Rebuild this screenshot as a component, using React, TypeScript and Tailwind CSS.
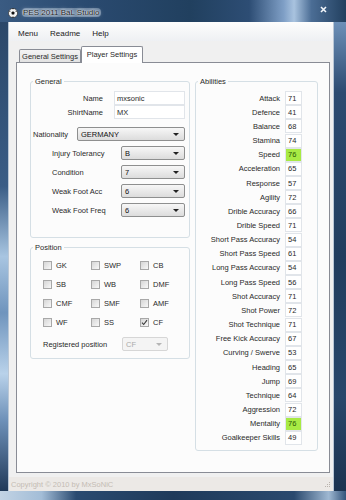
type Ability = { name: string; value: number; highlight?: boolean };

const abilities: Ability[] = [
  { name: "Attack", value: 71 },
  { name: "Defence", value: 41 },
  { name: "Balance", value: 68 },
  { name: "Stamina", value: 74 },
  { name: "Speed", value: 76, highlight: true },
  { name: "Acceleration", value: 65 },
  { name: "Response", value: 57 },
  { name: "Agility", value: 72 },
  { name: "Drible Accuracy", value: 66 },
  { name: "Drible Speed", value: 71 },
  { name: "Short Pass Accuracy", value: 54 },
  { name: "Short Pass Speed", value: 61 },
  { name: "Long Pass Accuracy", value: 54 },
  { name: "Long Pass Speed", value: 56 },
  { name: "Shot Accuracy", value: 71 },
  { name: "Shot Power", value: 72 },
  { name: "Shot Technique", value: 71 },
  { name: "Free Kick Accuracy", value: 67 },
  { name: "Curving / Swerve", value: 53 },
  { name: "Heading", value: 65 },
  { name: "Jump", value: 69 },
  { name: "Technique", value: 64 },
  { name: "Aggression", value: 72 },
  { name: "Mentality", value: 76, highlight: true },
  { name: "Goalkeeper Skills", value: 49 },
];

const positions = [
  ["GK", "SWP", "CB"],
  ["SB", "WB", "DMF"],
  ["CMF", "SMF", "AMF"],
  ["WF", "SS", "CF"],
];

type GroupBoxProps = {
  title: string;
  className: string;
  children: React.ReactNode;
};

function GroupBox(props: GroupBoxProps) {
  return (
    <fieldset className={`rounded-[3px] border border-[#d5dfe5] ${props.className}`}>
      <legend className="ml-[2px] px-[2px] leading-[9px]">{props.title}</legend>
      {props.children}
    </fieldset>
  );
}

type ComboProps = { value: string; width: string; disabled?: boolean };

function Combo(props: ComboProps) {
  return (
    <div
      className={`flex h-[14px] items-center justify-between rounded-[2px] border pl-[3px] pr-[5px] ${props.width} ${
        props.disabled
          ? "border-[#d6d6d6] bg-[#f4f4f4] text-[#aaaaaa]"
          : "border-[#8e8f8f] bg-[linear-gradient(#f7f7f7,#dcdcdc)] text-[#111]"
      }`}
    >
      <span>{props.value}</span>
      <span
        className={`h-0 w-0 border-x-[3px] border-t-[3px] border-x-transparent ${
          props.disabled ? "border-t-[#b5b5b5]" : "border-t-[#222]"
        }`}
      />
    </div>
  );
}

function CheckBox({ label, checked }: { label: string; checked: boolean }) {
  return (
    <div className="flex items-center">
      <span className="flex h-[9px] w-[9px] items-center justify-center border border-[#a8a8a8] bg-[linear-gradient(135deg,#d6d6d6,#f8f8f8)]">
        {checked && (
          <svg width="7" height="7" viewBox="0 0 7 7">
            <path d="M1 3.6 L2.7 5.5 L6 1.2" fill="none" stroke="#3a3a3a" strokeWidth="1.1" />
          </svg>
        )}
      </span>
      <span className="ml-[4px]">{label}</span>
    </div>
  );
}

function SoccerBall() {
  return (
    <svg width="10" height="10" viewBox="0 0 10 10">
      <circle cx="5" cy="5" r="4.6" fill="#f4f4f4" stroke="#222" strokeWidth="0.6" />
      <path d="M5 3.2 L6.7 4.4 L6.1 6.4 L3.9 6.4 L3.3 4.4 Z" fill="#111" />
      <path d="M1 3.4 L2.2 2.6 L2.3 4 Z M9 3.4 L7.8 2.6 L7.7 4 Z M3.6 9.2 L5 8.4 L6.4 9.2 Z M4 0.6 L5 1.4 L6 0.6 Z" fill="#111" />
    </svg>
  );
}

export default function App() {
  return (
    <div className="flex h-[500px] w-[346px] flex-col overflow-hidden font-['Liberation_Sans',Arial,sans-serif] text-[7.5px] leading-[9px] text-[#2a2a2a]">
      {/* title bar */}
      <div className="flex h-[22px] items-center bg-[linear-gradient(90deg,#3a5b82_0%,#2a4a70_25%,#21405f_55%,#2d4d74_72%,#7f9fc6_82%,#a9c3df_85%,#4b6d95_90%,#22405f_100%)] pl-[8px] pr-[19px] pt-[3px]">
        <SoccerBall />
        <span className="ml-[4px] rounded-[4px] bg-[#c9d6e3]/40 px-[1px] text-[8px] text-[#1b1b1b] [text-shadow:0_0_5px_#e6edf5,0_0_3px_#e6edf5,0_0_1px_#ffffff]">
          PES 2011 BaL Studio
        </span>
        <svg className="ml-auto mb-[6px]" width="7" height="7" viewBox="0 0 7 7">
          <path d="M1 1 L6 6 M6 1 L1 6" stroke="#f2f6fa" strokeWidth="1.6" />
        </svg>
      </div>

      <div className="flex h-[469px]">
        <div className="w-[8px] bg-[linear-gradient(180deg,#2b4769_0%,#3a5d86_35%,#a8c5e1_50%,#6f94bd_62%,#b9d2ea_75%,#6d90b8_85%,#213a59_100%)]" />

        {/* client area */}
        <div className="flex w-[326px] flex-col border-x border-[#b9c7d6] bg-[#f0f0f0]">
          {/* menu */}
          <div className="flex h-[19px] items-center bg-[linear-gradient(#fdfdfd,#eef0f3)] pl-[3px] pt-[3px] text-[8px] text-[#1a1a1a]">
            <span className="px-[6px]">Menu</span>
            <span className="px-[6px]">Readme</span>
            <span className="px-[6px]">Help</span>
          </div>

          {/* tabs */}
          <div className="flex h-[21px] items-end pl-[10px]">
            <div className="flex h-[13px] w-[62px] items-center justify-center rounded-t-[2px] border border-b-0 border-[#898c95] bg-[linear-gradient(#f4f4f4,#e2e2e2)]">
              General Settings
            </div>
            <div className="relative z-10 -mb-px flex h-[17px] w-[62px] items-start justify-center rounded-t-[2px] border border-b-0 border-[#898c95] bg-white pt-[3px]">
              Player Settings
            </div>
          </div>

          {/* tab panel */}
          <div className="ml-[7px] mr-[3px] flex h-[411px] border border-[#898c95] bg-[#fcfcfc] pl-[13px] pt-[14px]">
            <div className="flex w-[160px] flex-col">
              <GroupBox title="General" className="h-[161px]">
                <div className="mt-[5px] flex h-[14px] items-center">
                  <span className="w-[72px] text-right">Name</span>
                  <span className="ml-[11px] flex h-[14px] w-[71px] items-center border border-[#e1e5ea] bg-white pl-[2px]">
                    mxsonic
                  </span>
                </div>
                <div className="flex h-[14px] items-center">
                  <span className="w-[72px] text-right">ShirtName</span>
                  <span className="ml-[11px] flex h-[14px] w-[71px] items-center border border-[#e1e5ea] bg-white pl-[2px]">
                    MX
                  </span>
                </div>
                <div className="mt-[8px] flex items-center">
                  <span className="w-[46px] pl-[2px]">Nationality</span>
                  <Combo value="GERMANY" width="w-[108px]" />
                </div>
                {[
                  ["Injury Tolerancy", "B"],
                  ["Condition", "7"],
                  ["Weak Foot Acc", "6"],
                  ["Weak Foot Freq", "6"],
                ].map(([label, value]) => (
                  <div key={label} className="mt-[5px] flex items-center">
                    <span className="w-[90px] pl-[21px]">{label}</span>
                    <Combo value={value} width="w-[64px]" />
                  </div>
                ))}
              </GroupBox>

              <GroupBox title="Position" className="mt-[5px] h-[116px]">
                <div className="mt-[4px] flex flex-col pl-[12px]">
                  {positions.map((row) => (
                    <div key={row[0]} className="grid h-[19px] grid-cols-[48px_49px_1fr] items-center">
                      {row.map((p) => (
                        <CheckBox key={p} label={p} checked={p === "CF"} />
                      ))}
                    </div>
                  ))}
                </div>
                <div className="mt-[5px] flex items-center">
                  <span className="w-[91px] pl-[12px]">Registered position</span>
                  <Combo value="CF" width="w-[46px]" disabled />
                </div>
              </GroupBox>
            </div>

            <GroupBox title="Abilities" className="ml-[5px] h-[374px] w-[123px]">
              <div className="mt-[5px] flex flex-col">
                {abilities.map((a) => (
                  <div key={a.name} className="flex h-[14.17px] items-center">
                    <span className="w-[84px] whitespace-nowrap text-right">{a.name}</span>
                    <span
                      className={`ml-[5px] flex h-[14px] w-[17px] items-center border border-[#e1e5ea] pl-[2px] ${
                        a.highlight ? "bg-[#a8ea44] text-[#2b5a07]" : "bg-white"
                      }`}
                    >
                      {a.value}
                    </span>
                  </div>
                ))}
              </div>
            </GroupBox>
          </div>

          {/* status bar */}
          <div className="mt-[4px] flex h-[14px] items-center justify-between bg-[#ece9e6] pl-[2px] pr-[3px] text-[#c4bcb4]">
            <span>Copyright © 2010 by MxSoNiC</span>
            <svg width="7" height="7" viewBox="0 0 7 7">
              <path d="M6 1 h1 v1 h-1z M4 3 h1 v1 h-1z M6 3 h1 v1 h-1z M2 5 h1 v1 h-1z M4 5 h1 v1 h-1z M6 5 h1 v1 h-1z" fill="#b9b3ad" />
            </svg>
          </div>
        </div>

        <div className="w-[12px] bg-[linear-gradient(180deg,#6d90b8_0%,#2c4b71_15%,#213d5e_50%,#28476b_80%,#1c3350_100%)]" />
      </div>

      <div className="h-[9px] bg-[linear-gradient(90deg,#c2d3e4_0%,#a3bdd7_12%,#2a4a70_22%,#1f3a5a_50%,#2a496e_85%,#9fb8d2_95%,#33547b_100%)]" />
    </div>
  );
}
